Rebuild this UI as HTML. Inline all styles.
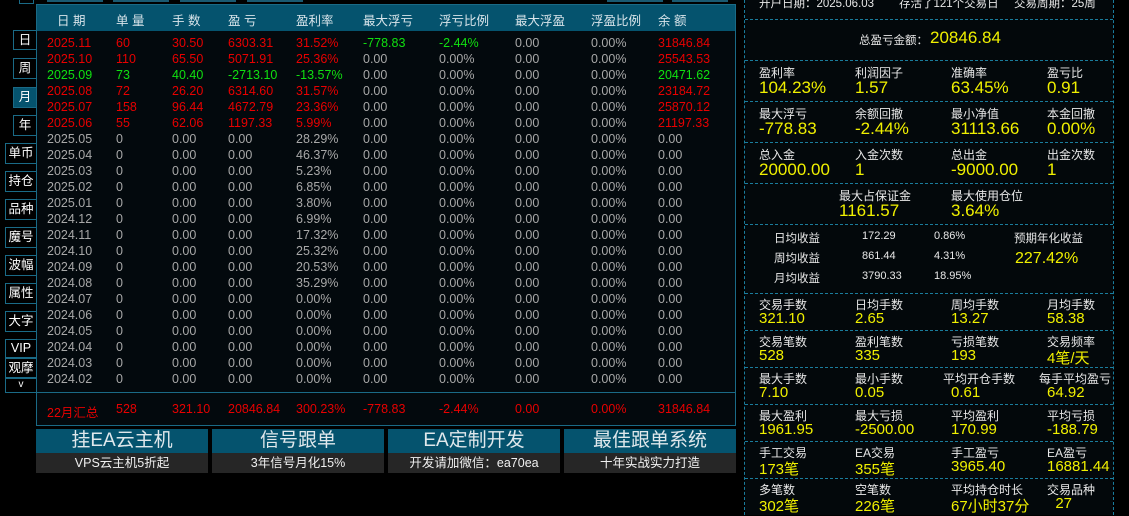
<!DOCTYPE html>
<html><head><meta charset="utf-8"><style>
*{margin:0;padding:0;box-sizing:border-box}
body{width:1129px;height:515px;background:#000;overflow:hidden;position:relative;font-family:"Liberation Sans","Noto Sans CJK SC",sans-serif;font-size:12.5px}
.a{position:absolute;white-space:nowrap}
.sb{position:absolute;border:1px solid #1a6a86;border-right:none;color:#fff;text-align:center;font-size:12.5px;background:#000}
.r{color:#e80000}.g{color:#10e010}.n{color:#a8a8a8}
.y{color:#f0f000}.w{color:#e8e8e8}
.dh{position:absolute;left:745px;width:368px;border-top:1px dashed #1a7c9c}
</style></head><body>
<div class="a" style="left:19px;top:0;width:15px;height:4px;border:1px solid #1a6a86;border-top:none"></div>
<div class="a" style="left:47px;top:0;width:56px;height:2px;background:#1a5a72"></div>
<div class="a" style="left:113px;top:0;width:56px;height:2px;background:#1a5a72"></div>
<div class="a" style="left:180px;top:0;width:56px;height:2px;background:#1a5a72"></div>
<div class="a" style="left:247px;top:0;width:56px;height:2px;background:#1a5a72"></div>
<div class="a" style="left:607px;top:0;width:56px;height:2px;background:#1a5a72"></div>
<div class="a" style="left:672px;top:0;width:56px;height:2px;background:#1a5a72"></div>
<div class="a" style="left:36px;top:4px;width:700px;height:389px;background:#03090d;border:1px solid #1a6a86"></div>
<div class="a" style="left:37px;top:5px;width:698px;height:26px;background:#05536e"></div>
<div class="a" style="left:36px;top:393px;width:700px;height:33px;background:#03090d;border:1px solid #1a6a86;border-top:none"></div>
<div id="t"></div>
<div class="sb" style="left:13px;top:30px;width:23px;height:20px;line-height:18px">日</div>
<div class="sb" style="left:13px;top:58px;width:23px;height:21px;line-height:19px">周</div>
<div class="sb" style="left:13px;top:87px;width:23px;height:21px;line-height:19px;background:#05536e">月</div>
<div class="sb" style="left:13px;top:115px;width:23px;height:21px;line-height:19px">年</div>
<div class="sb" style="left:5px;top:143px;width:31px;height:21px;line-height:19px">单币</div>
<div class="sb" style="left:5px;top:171px;width:31px;height:21px;line-height:19px">持仓</div>
<div class="sb" style="left:5px;top:199px;width:31px;height:21px;line-height:19px">品种</div>
<div class="sb" style="left:5px;top:227px;width:31px;height:21px;line-height:19px">魔号</div>
<div class="sb" style="left:5px;top:255px;width:31px;height:21px;line-height:19px">波幅</div>
<div class="sb" style="left:5px;top:283px;width:31px;height:21px;line-height:19px">属性</div>
<div class="sb" style="left:5px;top:311px;width:31px;height:21px;line-height:19px">大字</div>
<div class="sb" style="left:5px;top:339px;width:31px;height:19px;line-height:17px">VIP</div>
<div class="sb" style="left:5px;top:358px;width:31px;height:20px;line-height:18px">观摩</div>
<div class="sb" style="left:5px;top:378px;width:31px;height:15px;line-height:12px;font-size:10px">v</div>
<div id="btn"></div>
<div class="a" style="left:744px;top:0;height:515px;border-left:1px dashed #1a7c9c"></div>
<div class="a" style="left:1113px;top:0;height:515px;border-left:1px dashed #1a7c9c"></div>
<div class="a" style="left:745px;top:0;width:368px;height:515px;background:#03080b"></div>
<div class="a w" style="left:759px;top:-5px;font-size:11.5px">开户日期：2025.06.03</div>
<div class="a w" style="left:899px;top:-5px;font-size:11.5px">存活了121个交易日</div>
<div class="a w" style="left:1014px;top:-5px;font-size:11.5px">交易周期：25周</div>
<div class="dh" style="top:19px"></div>
<div class="a w" style="left:859px;top:32px;font-size:11.5px">总盈亏金额：</div>
<div class="a y" style="left:930px;top:28px;font-size:17px">20846.84</div>
<div class="dh" style="top:60px"></div>
<div id="rp"></div>
</body>
<script>
var cols=[47,116,172,228,296,363,439,515,591,658];
var h=["日 期","单 量","手 数","盈 亏","盈利率","最大浮亏","浮亏比例","最大浮盈","浮盈比例","余 额"];
var s="";
h.forEach((t,i)=>s+=`<div class="a" style="left:${cols[i]+(i==0?10:0)}px;top:10px;color:#d8e4ea;font-size:12.5px">${t}</div>`);
var top6=[["r","2025.11","60","30.50","6303.31","31.52%","-778.83","-2.44%","r","31846.84"],
["r","2025.10","110","65.50","5071.91","25.36%","0.00","0.00%","r","25543.53"],
["g","2025.09","73","40.40","-2713.10","-13.57%","0.00","0.00%","g","20471.62"],
["r","2025.08","72","26.20","6314.60","31.57%","0.00","0.00%","r","23184.72"],
["r","2025.07","158","96.44","4672.79","23.36%","0.00","0.00%","r","25870.12"],
["r","2025.06","55","62.06","1197.33","5.99%","0.00","0.00%","r","21197.33"]];
var rest=[["2025.05","28.29%"],["2025.04","46.37%"],["2025.03","5.23%"],["2025.02","6.85%"],["2025.01","3.80%"],["2024.12","6.99%"],["2024.11","17.32%"],["2024.10","25.32%"],["2024.09","20.53%"],["2024.08","35.29%"],["2024.07","0.00%"],["2024.06","0.00%"],["2024.05","0.00%"],["2024.04","0.00%"],["2024.03","0.00%"],["2024.02","0.00%"]];
var y=36;
top6.forEach((r,k)=>{var v=[r[1],r[2],r[3],r[4],r[5],r[6],r[7],"0.00","0.00%",r[9]];
v.forEach((t,i)=>{var c=r[0];if(i==5||i==6)c=(k==0?"g":"n");if(i==7||i==8)c="n";
s+=`<div class="a ${c}" style="left:${cols[i]}px;top:${y}px">${t}</div>`});y+=16;});
rest.forEach(r=>{var v=[r[0],"0","0.00","0.00",r[1],"0.00","0.00%","0.00","0.00%","0.00"];
v.forEach((t,i)=>s+=`<div class="a n" style="left:${cols[i]}px;top:${y}px">${t}</div>`);y+=16;});
var sm=[[47,"22月汇总"],[116,"528"],[172,"321.10"],[228,"20846.84"],[296,"300.23%"],[363,"-778.83"],[439,"-2.44%"],[515,"0.00"],[591,"0.00%"],[658,"31846.84"]];
sm.forEach(a=>s+=`<div class="a r" style="left:${a[0]}px;top:402px">${a[1]}</div>`);
document.getElementById("t").innerHTML=s;
var b=[[36,"挂EA云主机","VPS云主机5折起"],[212,"信号跟单","3年信号月化15%"],[388,"EA定制开发","开发请加微信：ea70ea"],[564,"最佳跟单系统","十年实战实力打造"]];
s="";b.forEach(a=>{s+=`<div class="a" style="left:${a[0]}px;top:429px;width:172px;height:24px;background:#05536e;color:#e0e8ec;font-size:19px;line-height:24px;text-align:center">${a[1]}</div><div class="a" style="left:${a[0]}px;top:453px;width:172px;height:20px;background:#262626;color:#f0f0f0;font-size:12.5px;line-height:20px;text-align:center">${a[2]}</div>`});
document.getElementById("btn").innerHTML=s;
var rc=[759,855,951,1047];
var g1=[[60,[["盈利率","104.23%"],["利润因子","1.57"],["准确率","63.45%"],["盈亏比","0.91"]]],
[101,[["最大浮亏","-778.83"],["余额回撤","-2.44%"],["最小净值","31113.66"],["本金回撤","0.00%"]]],
[142,[["总入金","20000.00"],["入金次数","1"],["总出金","-9000.00"],["出金次数","1"]]]];
s="";
g1.forEach(g=>{g[1].forEach((c,i)=>{s+=`<div class="a w" style="left:${rc[i]}px;top:${g[0]+4}px;font-size:12px">${c[0]}</div><div class="a y" style="left:${rc[i]}px;top:${g[0]+18}px;font-size:17px">${c[1]}</div>`});s+=`<div class="dh" style="top:${g[0]+41}px"></div>`});
s+=`<div class="a w" style="left:839px;top:187px;font-size:12px">最大占保证金</div><div class="a y" style="left:839px;top:201px;font-size:17px">1161.57</div><div class="a w" style="left:951px;top:187px;font-size:12px">最大使用仓位</div><div class="a y" style="left:951px;top:201px;font-size:17px">3.64%</div><div class="dh" style="top:224px"></div>`;
[["日均收益","172.29","0.86%",230],["周均收益","861.44","4.31%",250],["月均收益","3790.33","18.95%",270]].forEach(r=>{s+=`<div class="a w" style="left:774px;top:${r[3]}px;font-size:11.5px">${r[0]}</div><div class="a w" style="left:862px;top:${r[3]}px;font-size:11px">${r[1]}</div><div class="a w" style="left:934px;top:${r[3]}px;font-size:11px">${r[2]}</div>`});
s+=`<div class="a w" style="left:1014px;top:230px;font-size:11.5px">预期年化收益</div><div class="a y" style="left:1015px;top:250px;font-size:16px">227.42%</div><div class="dh" style="top:293px"></div>`;
var g2=[[["交易手数","321.10"],["日均手数","2.65"],["周均手数","13.27"],["月均手数","58.38"]],
[["交易笔数","528"],["盈利笔数","335"],["亏损笔数","193"],["交易频率","4笔/天"]],
[["最大手数","7.10"],["最小手数","0.05"],["平均开仓手数","0.61"],["每手平均盈亏","64.92"]],
[["最大盈利","1961.95"],["最大亏损","-2500.00"],["平均盈利","170.99"],["平均亏损","-188.79"]],
[["手工交易","173笔"],["EA交易","355笔"],["手工盈亏","3965.40"],["EA盈亏","16881.44"]],
[["多笔数","302笔"],["空笔数","226笔"],["平均持仓时长","67小时37分"],["交易品种","&nbsp;&nbsp;27"]]];
var yy=293;
g2.forEach((g,k)=>{g.forEach((c,i)=>{var lx=rc[i];if(k==2&&i==2)lx=943;if(k==2&&i==3)lx=1039;var vx=rc[i];if(k==2&&i==2)vx=951;
s+=`<div class="a w" style="left:${lx}px;top:${yy+3}px;font-size:12px">${c[0]}</div><div class="a y" style="left:${vx}px;top:${yy+17}px;font-size:15px">${c[1]}</div>`});yy+=37;if(k<5)s+=`<div class="dh" style="top:${yy}px"></div>`;});
document.getElementById("rp").innerHTML=s;
</script>
</html>
